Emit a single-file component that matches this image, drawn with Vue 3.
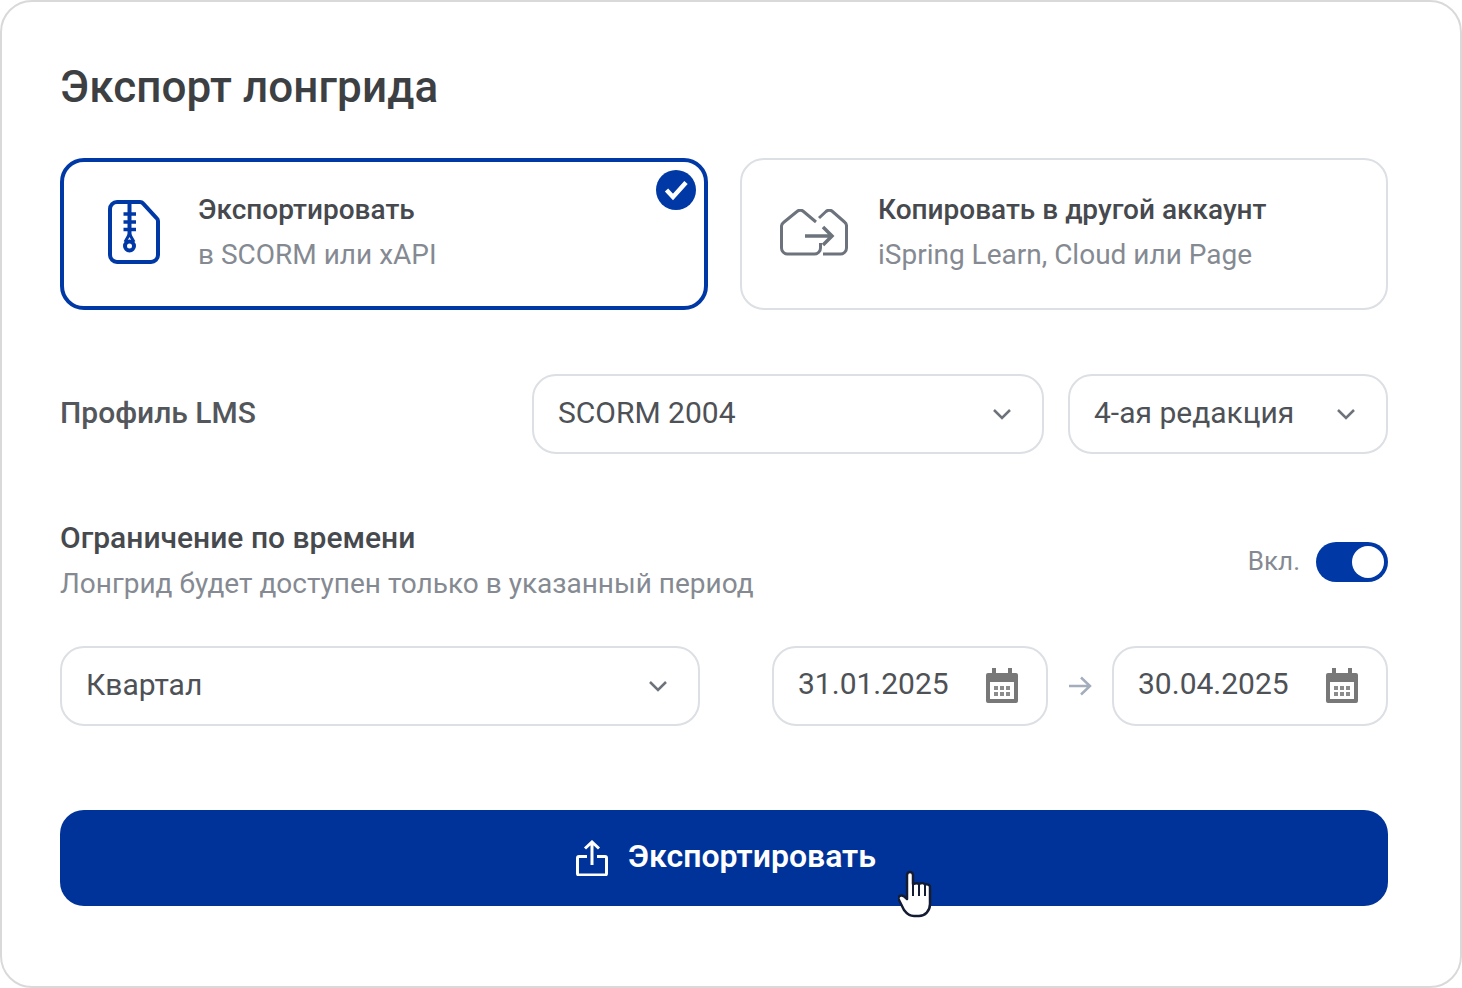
<script setup>
const chevron = 'M2 2l8 8 8-8'
</script>

<template>
  <div class="card">
    <h1 class="title">Экспорт лонгрида</h1>

    <div class="options">
      <div class="option selected">
        <svg class="zip-icon" width="52" height="64" viewBox="0 0 52 64" fill="none">
          <path d="M9 2h23a4 4 0 0 1 3 1.400L48.500 18a4 4 0 0 1 1.500 3V55a7 7 0 0 1-7 7H9a7 7 0 0 1-7-7V9a7 7 0 0 1 7-7z" stroke="#0039a6" stroke-width="4"/>
          <path d="M21.500 2v34" stroke="#0039a6" stroke-width="4"/>
          <path d="M15.500 14h12.500M15.500 22h12.500M15.500 29.500h12.500" stroke="#0039a6" stroke-width="3.500"/>
          <path d="M21.500 34l-4.500 8M21.500 34l4.500 8" stroke="#0039a6" stroke-width="3"/>
          <circle cx="21.500" cy="46" r="4.500" stroke="#0039a6" stroke-width="4"/>
        </svg>
        <div class="opt-text">
          <div class="opt-title">Экспортировать</div>
          <div class="opt-sub">в SCORM или xAPI</div>
        </div>
        <svg class="badge" width="40" height="40" viewBox="0 0 40 40">
          <circle cx="20" cy="20" r="20" fill="#0039a6"/>
          <path d="M10.500 20l6.500 7L30 12.500" fill="none" stroke="#fff" stroke-width="4.500"/>
        </svg>
      </div>
      <div class="option">
        <svg class="copy-icon" width="68" height="48" viewBox="0 0 68 48" fill="none">
          <path d="M36 13L23.500 2.500a5 5 0 0 0-6.500 0L3.500 13.500A5 5 0 0 0 1.500 18v21a6 6 0 0 0 6 6h27a6 6 0 0 0 6-6v-5" stroke="#6d737c" stroke-width="3"/>
          <path d="M39 9l7-6.500a5 5 0 0 1 6.500 0L64.500 13A5 5 0 0 1 66.500 17.500V39a6 6 0 0 1-6 6H43" stroke="#6d737c" stroke-width="3"/>
          <path d="M25 27h26M43 18l9 9-9 9" stroke="#6d737c" stroke-width="3.500"/>
        </svg>
        <div class="opt-text">
          <div class="opt-title">Копировать в другой аккаунт</div>
          <div class="opt-sub">iSpring Learn, Cloud или Page</div>
        </div>
      </div>
    </div>

    <div class="lms-row">
      <div class="lms-label">Профиль LMS</div>
      <div class="field w512">
        <span>SCORM 2004</span>
        <svg width="20" height="12" viewBox="0 0 20 12" fill="none"><path :d="chevron" stroke="#6d737c" stroke-width="2.500"/></svg>
      </div>
      <div class="field w320">
        <span>4-ая редакция</span>
        <svg width="20" height="12" viewBox="0 0 20 12" fill="none"><path :d="chevron" stroke="#6d737c" stroke-width="2.500"/></svg>
      </div>
    </div>

    <div class="limit-row">
      <div>
        <div class="limit-title">Ограничение по времени</div>
        <div class="limit-sub">Лонгрид будет доступен только в указанный период</div>
      </div>
      <div class="toggle-wrap">
        <span class="toggle-label">Вкл.</span>
        <div class="toggle"><div class="knob"></div></div>
      </div>
    </div>

    <div class="period-row">
      <div class="field w640">
        <span>Квартал</span>
        <svg width="20" height="12" viewBox="0 0 20 12" fill="none"><path :d="chevron" stroke="#6d737c" stroke-width="2.500"/></svg>
      </div>
      <div class="dates">
        <div class="field date">
          <span class="date-text">31.01.2025</span>
          <svg width="32" height="36" viewBox="0 0 32 36" fill="none">
            <path d="M6 0h4v6H6zM22 0h4v6h-4z" fill="#787878"/>
            <path fill-rule="evenodd" d="M2 5h28a2 2 0 0 1 2 2v26a2 2 0 0 1-2 2H2a2 2 0 0 1-2-2V7a2 2 0 0 1 2-2zM4 14v17h24V14z" fill="#787878"/>
            <path d="M8 18h4v4H8zM14 18h4v4h-4zM20 18h4v4h-4zM8 24h4v4H8zM14 24h4v4h-4zM20 24h4v4h-4z" fill="#8c8c8c"/>
          </svg>
        </div>
        <svg class="arrow" width="24" height="20" viewBox="0 0 24 20" fill="none">
          <path d="M1 10h21M13 1.500l9 8.500-9 8.500" stroke="#a3adbb" stroke-width="2.500"/>
        </svg>
        <div class="field date">
          <span class="date-text">30.04.2025</span>
          <svg width="32" height="36" viewBox="0 0 32 36" fill="none">
            <path d="M6 0h4v6H6zM22 0h4v6h-4z" fill="#787878"/>
            <path fill-rule="evenodd" d="M2 5h28a2 2 0 0 1 2 2v26a2 2 0 0 1-2 2H2a2 2 0 0 1-2-2V7a2 2 0 0 1 2-2zM4 14v17h24V14z" fill="#787878"/>
            <path d="M8 18h4v4H8zM14 18h4v4h-4zM20 18h4v4h-4zM8 24h4v4H8zM14 24h4v4h-4zM20 24h4v4h-4z" fill="#8c8c8c"/>
          </svg>
        </div>
      </div>
    </div>

    <button class="submit">
      <svg width="32" height="36" viewBox="0 0 32 36" fill="none">
        <path d="M11 16.500H3A1.500 1.500 0 0 0 1.500 18v15.500A1.500 1.500 0 0 0 3 35h26a1.500 1.500 0 0 0 1.500-1.500V18a1.500 1.500 0 0 0-1.500-1.500h-8" stroke="#fff" stroke-width="3"/>
        <path d="M16 25V2M9 8.500L16 2l7 6.500" stroke="#fff" stroke-width="3"/>
      </svg>
      <span class="submit-text">Экспортировать</span>
      <svg class="cursor" width="36" height="50" viewBox="0 0 36 50">
        <path d="M9 7a3 3 0 0 1 6 0v9c3-1 5-1 6 0 2-1 5-1 6 .500 2-.5 5 0 5 2.500V36c0 7-5 12-11 12h-5c-4 0-7-2-10-6L1 32c-1.500-2 0-5 3-4.500 2 .3 3.500 2 5 3.500z" fill="#fff" stroke="#141c33" stroke-width="2.500" stroke-linejoin="round"/>
        <path d="M15 16v12M21 16v12M27 17v11" stroke="#141c33" stroke-width="2"/>
      </svg>
    </button>
  </div>
</template>

<style scoped>
.card {
  box-sizing: border-box;
  width: 1462px;
  height: 988px;
  border: 2px solid #d9d9d9;
  border-radius: 32px;
  background: #fff;
  padding: 58px 72px 0 58px;
  font-family: Roboto, "Liberation Sans", sans-serif;
  color: #3d4043;
}
.title {
  margin: 0;
  font-size: 44px;
  line-height: 54px;
  font-weight: 500;
  color: #3d4043;
  letter-spacing: 0.1px;
}
.options {
  display: flex;
  gap: 32px;
  margin-top: 44px;
}
.option {
  box-sizing: border-box;
  position: relative;
  width: 648px;
  height: 152px;
  border: 2px solid #dcdfe3;
  border-radius: 24px;
  display: flex;
  align-items: center;
  padding-left: 38px;
}
.option.selected {
  border: 4px solid #0039a6;
  padding-left: 44px;
}
.zip-icon { flex: none; margin-bottom: 5px; }
.copy-icon { flex: none; margin-bottom: 3px; }
.opt-text { padding-bottom: 3px; }
.option .opt-text { margin-left: 30px; }
.option.selected .opt-text { margin-left: 38px; }
.opt-title {
  font-size: 28px;
  line-height: 36px;
  font-weight: 500;
  color: #46494d;
}
.opt-sub {
  font-size: 28px;
  line-height: 36px;
  margin-top: 9px;
  color: #858a92;
}
.badge {
  position: absolute;
  top: 8px;
  right: 8px;
}
.lms-row {
  display: flex;
  align-items: center;
  margin-top: 64px;
}
.lms-label {
  width: 472px;
  font-size: 30px;
  font-weight: 500;
  color: #53575c;
  padding-bottom: 4px;
}
.field {
  box-sizing: border-box;
  height: 80px;
  border: 2px solid #dcdfe3;
  border-radius: 24px;
  display: flex;
  align-items: center;
  justify-content: space-between;
  padding: 0 30px 0 24px;
  font-size: 30px;
  color: #4e5156;
}
.field > span { padding-bottom: 4px; }
.w512 { width: 512px; margin-right: 24px; }
.w320 { width: 320px; }
.w640 { width: 640px; }
.limit-row {
  display: flex;
  justify-content: space-between;
  align-items: center;
  margin-top: 64px;
}
.limit-title {
  font-size: 30px;
  line-height: 40px;
  font-weight: 500;
  color: #46494d;
}
.limit-sub {
  font-size: 28px;
  line-height: 36px;
  margin-top: 8px;
  color: #858a92;
}
.toggle-wrap {
  display: flex;
  align-items: center;
  gap: 16px;
  margin-top: 4px;
}
.toggle-label {
  font-size: 26px;
  color: #858a92;
  padding-bottom: 2px;
}
.toggle {
  box-sizing: border-box;
  width: 72px;
  height: 40px;
  border-radius: 20px;
  background: #0039a6;
  padding: 4px;
  display: flex;
  justify-content: flex-end;
}
.knob {
  width: 32px;
  height: 32px;
  border-radius: 50%;
  background: #fff;
}
.period-row {
  display: flex;
  justify-content: space-between;
  margin-top: 44px;
}
.dates {
  display: flex;
  align-items: center;
}
.date {
  width: 276px;
  padding: 0 28px 0 24px;
}
.field > .date-text { padding-bottom: 6px; }
.arrow { margin: 0 20px; }
.submit {
  box-sizing: border-box;
  position: relative;
  width: 1328px;
  height: 96px;
  margin-top: 84px;
  border: 0;
  border-radius: 24px;
  background: #003399;
  color: #fff;
  font-family: inherit;
  font-size: 32px;
  font-weight: 600;
  display: flex;
  align-items: center;
  justify-content: center;
  gap: 20px;
  padding: 0 0 0 4px;
}
.submit-text { padding-bottom: 4px; }
.cursor {
  position: absolute;
  left: 838px;
  top: 58px;
}
</style>
